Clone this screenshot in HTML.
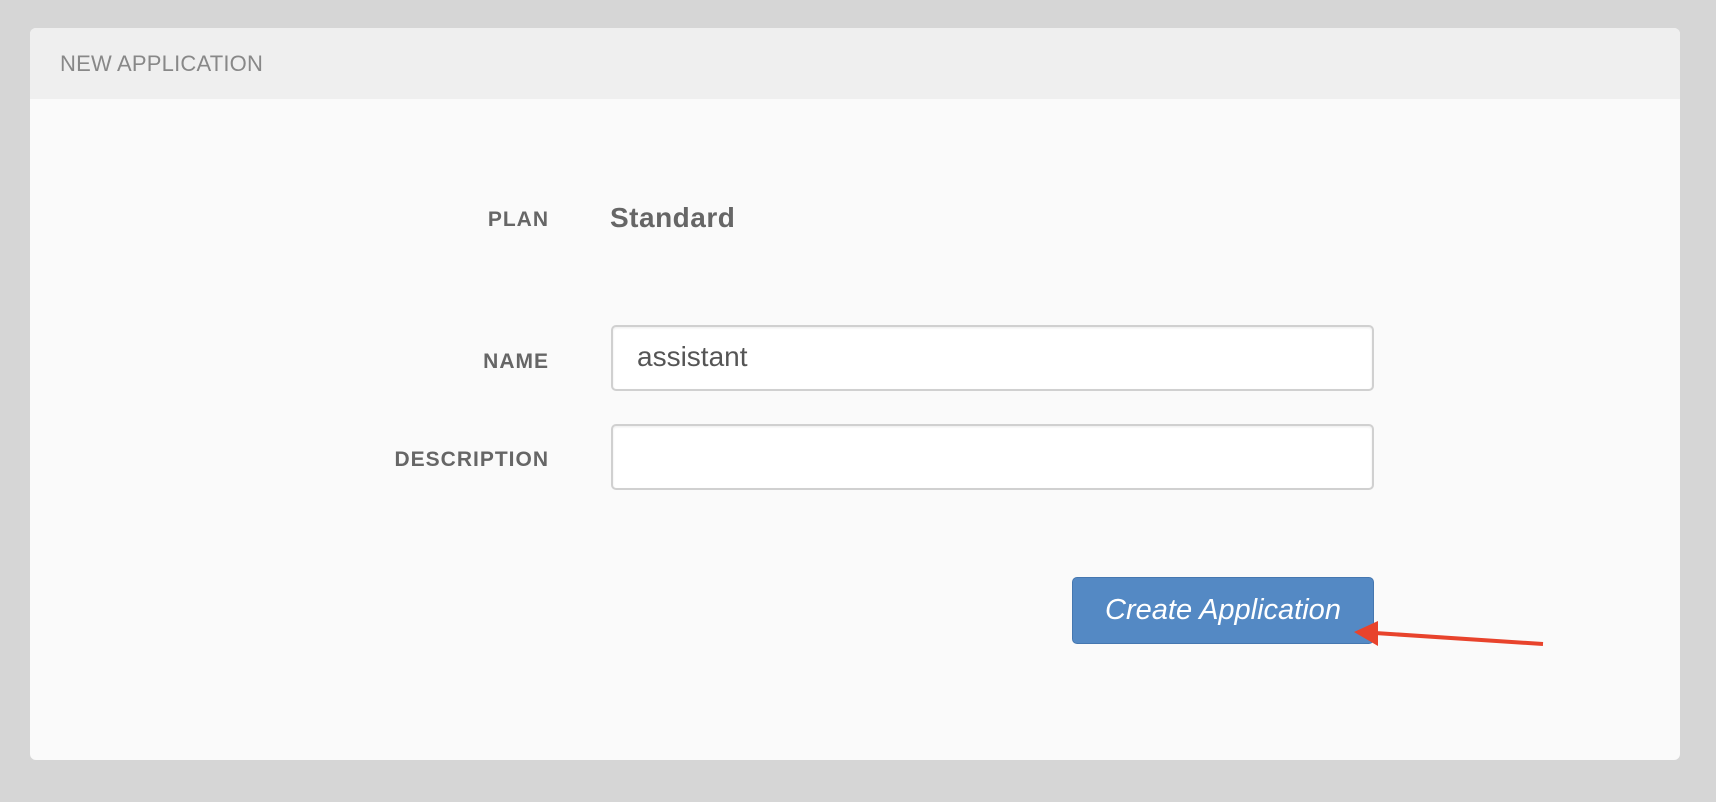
<!DOCTYPE html>
<html><head><style>
body{margin:0;width:1716px;height:802px;background:#d6d6d6;font-family:"Liberation Sans",sans-serif;position:relative;overflow:hidden}
.card{position:absolute;left:30px;top:28px;width:1650px;height:732px;background:#fafafa;border-radius:6px;overflow:hidden}
.hd{height:71px;background:#efefef;}
.hd span{position:absolute;left:30px;top:23px;font-size:22px;color:#888;letter-spacing:0.2px}
.lbl{position:absolute;right:1167px;font-weight:bold;font-size:21px;color:#666;letter-spacing:1px}
.inp{position:absolute;left:611px;width:763px;height:66px;border:2px solid #d0d0d0;border-radius:5px;background:#fff;box-sizing:border-box;box-shadow:inset 0 1px 2px rgba(0,0,0,.08)}
</style></head><body>
<div class="card"><div class="hd"><span>NEW APPLICATION</span></div></div>
<div class="lbl" style="top:208px">PLAN</div>
<div style="position:absolute;left:610px;top:202px;font-size:28px;font-weight:bold;color:#666;letter-spacing:0.5px">Standard</div>
<div class="lbl" style="top:350px">NAME</div>
<div class="inp" style="top:325px"><span style="position:absolute;left:24px;top:14px;font-size:28px;color:#555">assistant</span></div>
<div class="lbl" style="top:448px">DESCRIPTION</div>
<div class="inp" style="top:424px"></div>
<div style="position:absolute;left:1072px;top:577px;width:302px;height:67px;background:#5489c4;border:1px solid #4577b0;box-sizing:border-box;border-radius:5px;color:#fff;font-style:italic;font-size:29px;text-align:center;line-height:64px">Create Application</div>
<svg style="position:absolute;left:0;top:0" width="1716" height="802">
<line x1="1543" y1="644" x2="1375" y2="633" stroke="#e8432c" stroke-width="4"/>
<polygon points="1354,632 1378,621 1378,646" fill="#e8432c"/>
</svg>
</body></html>
